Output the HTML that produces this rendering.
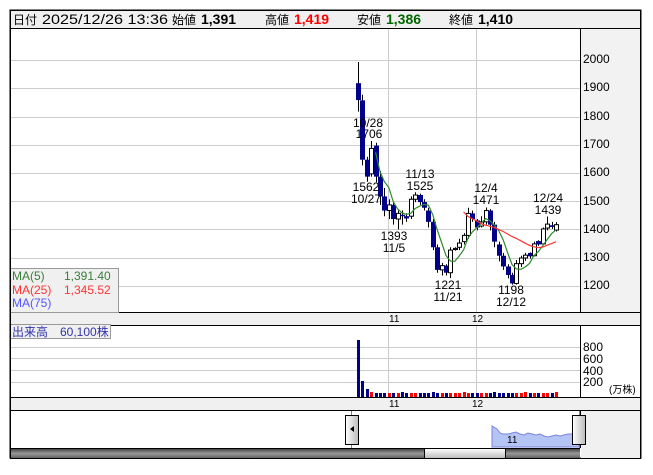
<!DOCTYPE html>
<html><head><meta charset="utf-8"><style>
body{margin:0;background:#fff;width:653px;height:470px;overflow:hidden;font-family:"Liberation Sans","Noto Sans CJK JP",sans-serif}
svg text{font-family:"Liberation Sans","Noto Sans CJK JP",sans-serif}
</style></head><body>
<svg id="s" width="653" height="470" xmlns="http://www.w3.org/2000/svg">
<rect x="10" y="10" width="631" height="448" fill="#fff" stroke="#000"/>
<rect x="10.5" y="10.5" width="630" height="18" fill="#f0f0f0" stroke="#000"/>
<text y="24" font-size="14" fill="#000"><tspan x="13" font-size="12">日付</tspan><tspan x="42" textLength="126" lengthAdjust="spacingAndGlyphs">2025/12/26 13:36</tspan><tspan x="172" font-size="12">始値</tspan><tspan x="201" font-weight="bold">1,391</tspan><tspan x="265" font-size="12">高値</tspan><tspan x="294" font-weight="bold" fill="#f00">1,419</tspan><tspan x="357" font-size="12">安値</tspan><tspan x="386" font-weight="bold" fill="#060">1,386</tspan><tspan x="449" font-size="12">終値</tspan><tspan x="478" font-weight="bold">1,410</tspan></text>
<rect x="580" y="29" width="61" height="283" fill="#f2f2f2"/>
<line x1="580.5" y1="29" x2="580.5" y2="448" stroke="#000"/>
<g id="grid" stroke="#ccc"></g>
<g id="candles"></g>
<line x1="10" y1="312.5" x2="641" y2="312.5" stroke="#000"/>
<rect x="11" y="313" width="629" height="12" fill="#f0f0f0"/>
<line x1="10" y1="325.5" x2="641" y2="325.5" stroke="#000"/>
<text x="389" y="322" font-size="10">11</text><text x="472" y="322" font-size="10">12</text>
<line x1="10" y1="397.5" x2="641" y2="397.5" stroke="#000"/>
<rect x="11" y="398" width="629" height="12" fill="#f0f0f0"/>
<line x1="10" y1="410.5" x2="641" y2="410.5" stroke="#000"/>
<text x="389" y="407" font-size="10">11</text><text x="472" y="407" font-size="10">12</text>
<rect x="581" y="411" width="59" height="47" fill="#f0f0f0"/>
<g font-size="12" fill="#000">
<text x="583" y="63">2000</text><text x="583" y="91">1900</text><text x="583" y="120">1800</text><text x="583" y="148">1700</text><text x="583" y="176">1600</text><text x="583" y="205">1500</text><text x="583" y="233">1400</text><text x="583" y="261">1300</text><text x="583" y="289">1200</text>
<text x="583" y="351">800</text><text x="583" y="363">600</text><text x="583" y="375">400</text><text x="583" y="386">200</text>
</g>
<text x="609" y="393" font-size="10">(万株)</text>
<g font-size="12" fill="#000" text-anchor="middle">
<text x="368" y="127">10/28</text><text x="369" y="138">1706</text>
<text x="366" y="191">1562</text><text x="366" y="203">10/27</text>
<text x="420" y="178">11/13</text><text x="420" y="190">1525</text>
<text x="394" y="240">1393</text><text x="394" y="252">11/5</text>
<text x="486" y="192">12/4</text><text x="486" y="204">1471</text>
<text x="448" y="289">1221</text><text x="448" y="301">11/21</text>
<text x="548" y="202">12/24</text><text x="548" y="214">1439</text>
<text x="511" y="294">1198</text><text x="511" y="306">12/12</text>
</g>
<rect x="10.5" y="268.5" width="108" height="44" fill="#f0f0f0" stroke="#999"/>
<text font-size="12"><tspan x="12" y="280" fill="#3a7d3a">MA(5)</tspan><tspan x="64" y="280" fill="#3a7d3a">1,391.40</tspan><tspan x="12" y="294" fill="#f33">MA(25)</tspan><tspan x="64" y="294" fill="#f33">1,345.52</tspan><tspan x="12" y="307" fill="#55f">MA(75)</tspan></text>
<rect x="10.5" y="324.5" width="100" height="14" fill="#f0f0f0" stroke="#999"/>
<text x="12" y="336" font-size="12" fill="#33a">出来高　60,100株</text>
<g id="vol"></g>
<polygon points="492,447 492,426 497,429 500,433 503,434 508,434 512,433 516,432 520,434 524,435 528,433 532,434 536,435 540,434 544,436 548,437 552,436 556,435 560,436 564,435 568,434 572,434 579,433 579,447" fill="#b4c4f4" stroke="#7a86d8"/>
<text x="507" y="443" font-size="10">11</text>
<line x1="351.5" y1="411" x2="351.5" y2="448" stroke="#39c"/>
<line x1="579.5" y1="411" x2="579.5" y2="448" stroke="#39c"/>
<defs><linearGradient id="hg" x1="0" x2="1"><stop offset="0" stop-color="#fff"/><stop offset="1" stop-color="#bbb"/></linearGradient>
<linearGradient id="sg" x1="0" y1="0" x2="0" y2="1"><stop offset="0" stop-color="#333"/><stop offset=".5" stop-color="#999"/><stop offset="1" stop-color="#555"/></linearGradient>
<linearGradient id="tg" x1="0" y1="0" x2="0" y2="1"><stop offset="0" stop-color="#fff"/><stop offset="1" stop-color="#bbb"/></linearGradient></defs>
<rect x="345.5" y="415.5" width="13" height="29" fill="url(#hg)" stroke="#000"/>
<polygon points="350,429 354,426 354,432" fill="#000"/>
<rect x="572.5" y="415.5" width="13" height="29" fill="url(#hg)" stroke="#000"/>
<rect x="10" y="448" width="570" height="11" fill="url(#sg)"/>
<rect x="424.5" y="448.5" width="81" height="10" fill="url(#tg)" stroke="#000"/>
<line x1="10" y1="448.5" x2="580" y2="448.5" stroke="#000"/>
<rect x="10.5" y="10.5" width="630" height="448" fill="none" stroke="#000"/>
</svg>
<script>
var NS="http://www.w3.org/2000/svg";
function el(p,t,a){var e=document.createElementNS(NS,t);for(var k in a)e.setAttribute(k,a[k]);p.appendChild(e);return e;}
var g=document.getElementById('grid');
for(var v=1200;v<=2000;v+=100){var y=Math.round(58+(2000-v)*0.2825)+2.5;el(g,'line',{x1:11,y1:y,x2:580,y2:y});}
el(g,'line',{x1:388.5,y1:29,x2:388.5,y2:312});el(g,'line',{x1:476.5,y1:29,x2:476.5,y2:312});
el(g,'line',{x1:388.5,y1:326,x2:388.5,y2:397});el(g,'line',{x1:476.5,y1:326,x2:476.5,y2:397});
[347,358,370,382].forEach(function(y){el(g,'line',{x1:11,y1:y+.5,x2:580,y2:y+.5});});
var d=[[1911,1986,1810,1851],[1850,1870,1620,1640],[1640,1650,1562,1580],[1590,1706,1580,1680],[1690,1700,1560,1580],[1580,1600,1480,1510],[1510,1540,1440,1460],[1460,1500,1430,1480],[1480,1490,1410,1430],[1430,1460,1393,1450],[1445,1460,1410,1440],[1440,1450,1420,1432],[1440,1510,1430,1500],[1500,1525,1490,1515],[1515,1520,1480,1490],[1490,1500,1460,1470],[1460,1470,1400,1420],[1420,1430,1320,1330],[1330,1340,1240,1250],[1250,1275,1230,1265],[1265,1270,1230,1240],[1240,1330,1221,1320],[1322,1330,1318,1326],[1330,1360,1320,1345],[1350,1380,1340,1372],[1372,1470,1360,1450],[1450,1460,1420,1430],[1425,1430,1390,1400],[1405,1440,1400,1420],[1420,1471,1410,1460],[1460,1465,1390,1410],[1410,1420,1330,1350],[1340,1350,1280,1300],[1300,1310,1250,1262],[1262,1270,1220,1232],[1232,1240,1198,1202],[1202,1285,1198,1272],[1272,1300,1260,1292],[1292,1310,1282,1302],[1310,1312,1290,1298],[1300,1350,1298,1342],[1352,1355,1335,1340],[1342,1400,1338,1395],[1398,1439,1390,1412],[1408,1420,1395,1402],[1391,1419,1386,1410]];
var c=document.getElementById('candles');
function Y(p){return 58+(2000-p)*0.2825;}
function X(i){return 358+i*4.4;}
function ma(n,col,start){var pts=[];for(var i=n-1;i<d.length;i++){var s=0;for(var j=i-n+1;j<=i;j++)s+=d[j][3];if(i>=start)pts.push(X(i).toFixed(1)+','+Y(s/n).toFixed(1));}el(c,'polyline',{points:pts.join(' '),fill:'none',stroke:col,'stroke-width':1.2});}
d.forEach(function(k,i){var x=Math.round(X(i));var up=k[3]>=k[0];
el(c,'line',{x1:x+.5,y1:Y(k[1]),x2:x+.5,y2:Y(k[2]),stroke:'#000'});
var t=Y(Math.max(k[0],k[3])),b=Y(Math.min(k[0],k[3]));var h=Math.max(b-t,1);
if(up)el(c,'rect',{x:x-1.5,y:t,width:4,height:h,fill:'#fff',stroke:'#000','stroke-width':1});
else el(c,'rect',{x:x-2,y:t,width:5,height:h,fill:'#00008b'});});
ma(5,'#2e8b2e',4);ma(25,'#f33',24);
var vg=document.getElementById('vol');
d.forEach(function(k,i){var x=Math.round(X(i))-1;var h=i==0?57:i==1?16:i==2?8:(i%7==3?5:4);var up=k[3]>=k[0];
el(vg,'rect',{x:x,y:397-h,width:3,height:h,fill:(i<3||!up)?'#00008b':'#f00'});});
</script>
</body></html>
